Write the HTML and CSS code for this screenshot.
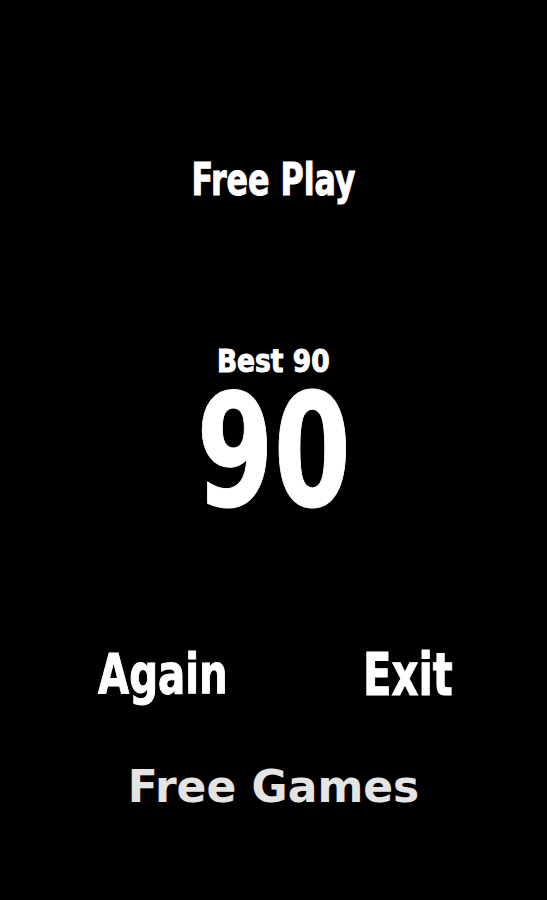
FILE: index.html
```html
<!DOCTYPE html>
<html>
<head>
<meta charset="utf-8">
<link rel="stylesheet" href="styles.css">
</head>
<body>
<main class="screen">
  <h1 class="title">Free Play</h1>
  <div class="best">Best 90</div>
  <div class="score">90</div>
  <div class="actions">
    <button class="btn again">Again</button>
    <button class="btn exit">Exit</button>
  </div>
  <div class="more">Free Games</div>
</main>
</body>
</html>
```
FILE: styles.css
```css
html, body {
  margin: 0;
  padding: 0;
  background: #000;
}
.screen {
  width: 547px;
  height: 900px;
  display: flex;
  flex-direction: column;
  align-items: center;
  color: #fff;
  font-family: "DejaVu Sans", sans-serif;
  font-stretch: condensed;
  font-weight: bold;
}
.title, .best, .score, .btn {
  -webkit-text-stroke: 1px #fff;
}
.title {
  margin: 155px 0 0;
  font-size: 44px;
  line-height: 50px;
  font-weight: bold;
  transform: scaleX(0.8);
}
.best {
  margin-top: 147px;
  font-size: 32px;
  line-height: 18px;
  transform: scaleX(0.92);
}
.score {
  margin-top: 4px;
  font-size: 156px;
  line-height: 156px;
  transform: scaleX(0.79);
}
.actions {
  margin-top: 109px;
  width: 100%;
  display: flex;
  align-items: flex-start;
}
.btn {
  background: none;
  border: 0;
  padding: 0;
  color: #fff;
  font: inherit;
  font-size: 56px;
  line-height: 70px;
  transform-origin: left center;
}
.again {
  margin-left: 98px;
  transform: scaleX(0.8);
}
.exit {
  margin-left: 103px;
  margin-top: 1px;
  font-size: 58px;
  transform: scaleX(0.8);
}
.more {
  margin-top: 47px;
  font-family: "DejaVu Sans", sans-serif;
  font-stretch: normal;
  font-weight: bold;
  font-size: 44px;
  color: #e4e4e4;
  line-height: 60px;
}
```
